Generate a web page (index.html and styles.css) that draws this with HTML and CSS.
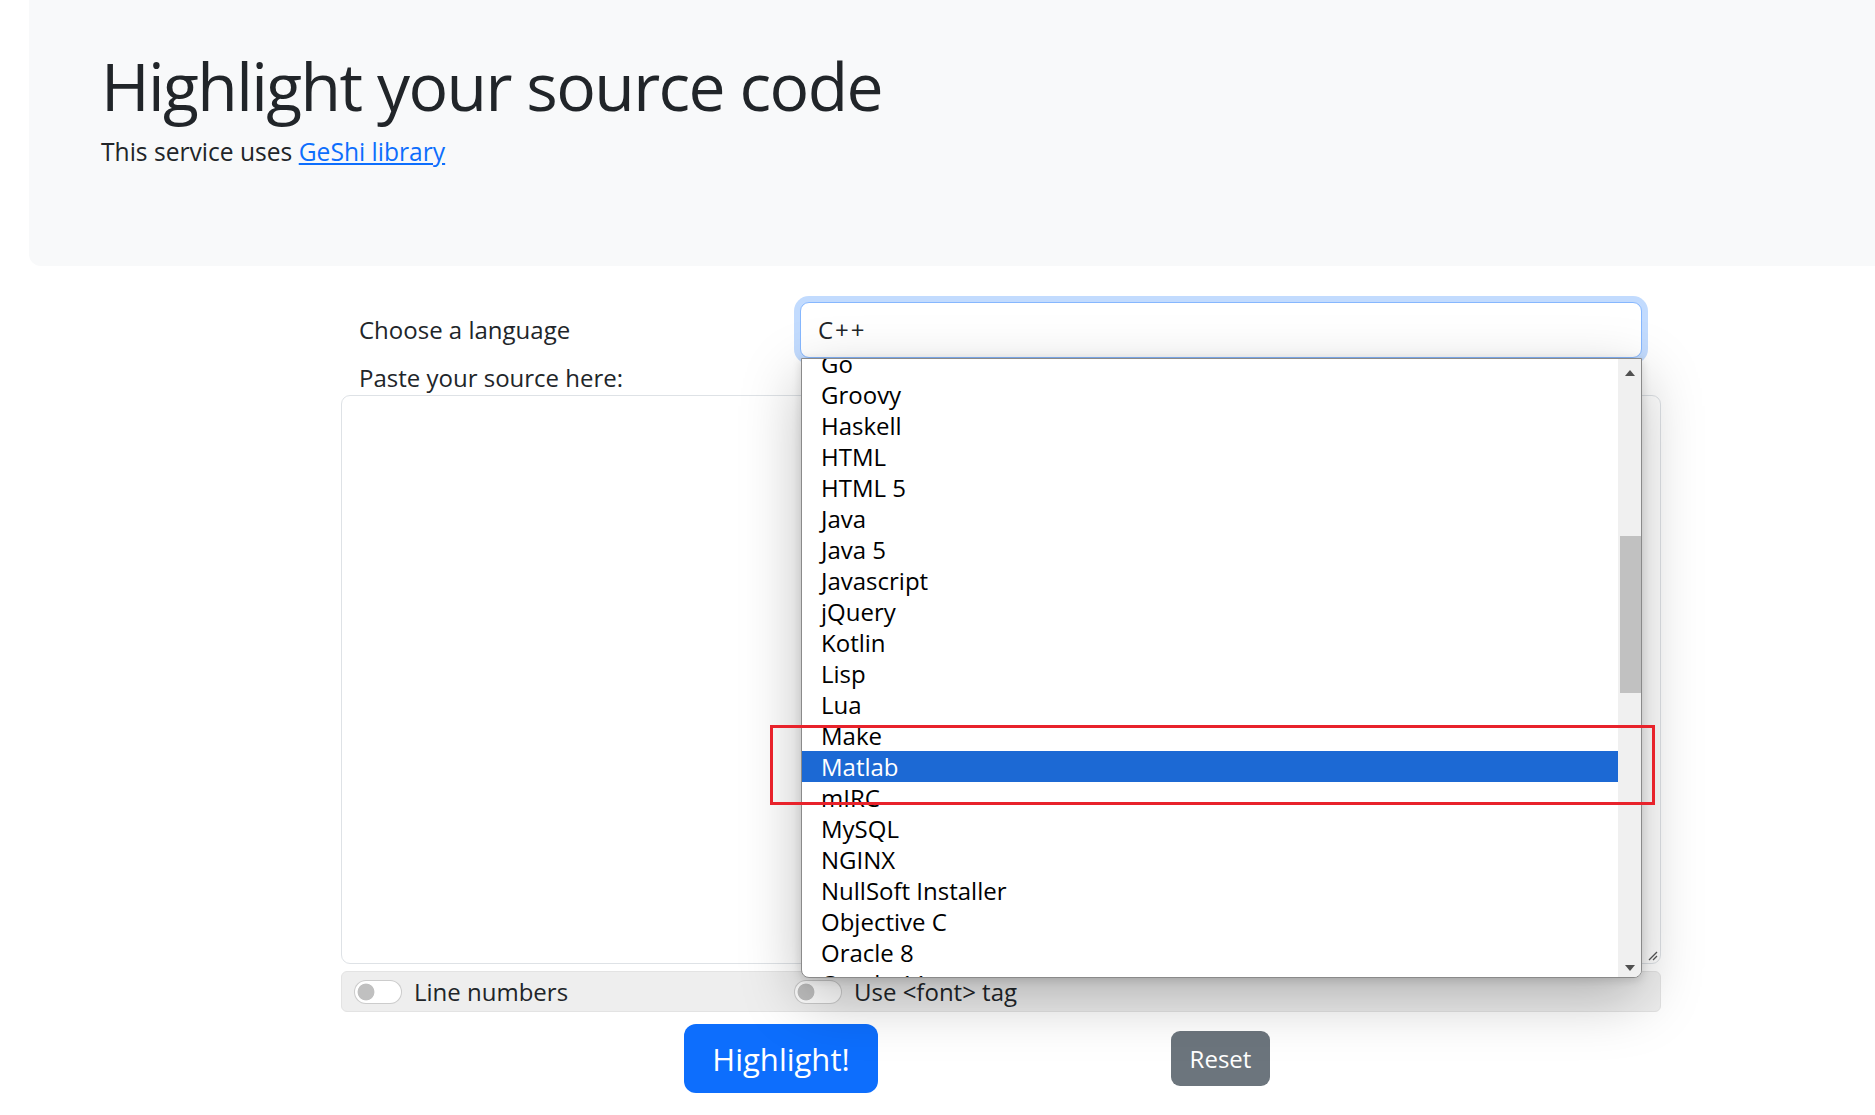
FILE: index.html
```html
<!DOCTYPE html>
<html lang="en">
<head>
<meta charset="utf-8">
<title>Highlight your source code</title>
<link rel="stylesheet" href="styles.css">
</head>
<body>
<header class="jumbotron">
  <h1 class="title">Highlight your source code</h1>
  <p class="intro">This service uses <a href="#" class="link">GeShi library</a></p>
</header>
<form class="form">
  <div class="lang-row">
    <label class="label">Choose a language</label>
    <div class="select-wrap">
      <div class="select">C++</div>
      <div class="popup">
        <ul class="list">
          <li>Go</li>
          <li>Groovy</li>
          <li>Haskell</li>
          <li>HTML</li>
          <li>HTML 5</li>
          <li>Java</li>
          <li>Java 5</li>
          <li>Javascript</li>
          <li>jQuery</li>
          <li>Kotlin</li>
          <li>Lisp</li>
          <li>Lua</li>
          <li>Make</li>
          <li class="sel">Matlab</li>
          <li>mIRC</li>
          <li>MySQL</li>
          <li>NGINX</li>
          <li>NullSoft Installer</li>
          <li>Objective C</li>
          <li>Oracle 8</li>
          <li>Oracle 11</li>
        </ul>
        <div class="scrollbar">
          <span class="arrow arrow-up"><i class="tri tri-up"></i></span>
          <span class="thumb"></span>
          <span class="arrow arrow-down"><i class="tri tri-down"></i></span>
        </div>
      </div>
    </div>
  </div>
  <label class="label paste">Paste your source here:</label>
  <div class="textarea">
    <svg class="grip" width="12" height="12" viewBox="0 0 12 12"><path d="M11 3 L3 11 M11 7 L7 11" stroke="#555" stroke-width="1.3" fill="none"/></svg>
  </div>
  <div class="opts">
    <label class="opt"><span class="switch"></span>Line numbers</label>
    <label class="opt"><span class="switch"></span>Use &lt;font&gt; tag</label>
  </div>
  <div class="actions">
    <button type="button" class="btn btn-primary">Highlight!</button>
    <button type="button" class="btn btn-secondary">Reset</button>
  </div>
</form>
<div class="annot"></div>
</body>
</html>
```
FILE: styles.css
```css
html, body {
  margin: 0;
  padding: 0;
}
body {
  font-family: "Open Sans", "Noto Sans", sans-serif;
  font-size: 24px;
  line-height: 36px;
  color: #212529;
  background: #fff;
  overflow: hidden;
  position: relative;
  height: 1115px;
}
.jumbotron {
  margin-left: 29px;
  height: 266px;
  box-sizing: border-box;
  padding: 46px 72px 0;
  background: #f8f9fa;
  border-bottom-left-radius: 12px;
}
.title {
  margin: 0;
  font-size: 66px;
  line-height: 79px;
  font-weight: 400;
  letter-spacing: -1.6px;
}
.intro {
  margin: 9px 0 0;
  font-size: 24.6px;
}
.link {
  color: #0d6efd;
  text-decoration: underline;
}
.form {
  margin: 36px 0 0 341px;
  width: 1320px;
}
.lang-row {
  display: flex;
  align-items: center;
}
.label {
  display: block;
  box-sizing: border-box;
  width: 459px;
  padding-left: 18px;
}
.select-wrap {
  position: relative;
  width: 842px;
}
.select {
  height: 56px;
  box-sizing: border-box;
  border: 1px solid #86b7fe;
  border-radius: 9px;
  box-shadow: 0 0 0 6px rgba(13, 110, 253, 0.25);
  padding: 0 17px;
  line-height: 54px;
  letter-spacing: 2px;
  background: #fff;
}
.popup {
  position: absolute;
  top: 56px;
  left: 1px;
  width: 841px;
  height: 620px;
  box-sizing: border-box;
  border: 1px solid #8a8a8a;
  border-radius: 0 0 8px 8px;
  background: #fff;
  display: flex;
  overflow: hidden;
  z-index: 2;
  box-shadow: 0 20px 60px rgba(0, 0, 0, 0.26), 0 2px 10px rgba(0, 0, 0, 0.14);
}
.list {
  flex: 1;
  margin: 0;
  padding: 0;
  list-style: none;
  overflow: hidden;
}
.list li {
  height: 31.03px;
  line-height: 31px;
  padding-left: 19px;
  color: #000;
  white-space: nowrap;
}
.list li:first-child {
  margin-top: -11px;
}
.list li.sel {
  background: #1c69d4;
  color: #fff;
}
.scrollbar {
  width: 23px;
  background: #f0f0f0;
  display: flex;
  flex-direction: column;
}
.arrow {
  display: flex;
  align-items: center;
  justify-content: center;
}
.arrow-up {
  height: 28px;
}
.arrow-down {
  height: 18px;
  margin-top: auto;
}
.tri {
  width: 0;
  height: 0;
  border-left: 5.5px solid transparent;
  border-right: 5.5px solid transparent;
}
.tri-up {
  border-bottom: 6px solid #505050;
}
.tri-down {
  border-top: 6px solid #505050;
}
.thumb {
  margin: 149px 0 0 2px;
  height: 157px;
  background: #c1c1c1;
}
.paste {
  margin-top: 2px;
  height: 35px;
}
.textarea {
  height: 569px;
  box-sizing: border-box;
  border: 1px solid #dee2e6;
  border-radius: 9px;
  background: #fff;
  display: flex;
  align-items: flex-end;
  justify-content: flex-end;
  padding: 0 2px 2px 0;
}
.opts {
  margin-top: 7px;
  height: 41px;
  box-sizing: border-box;
  background: #eeeeee;
  border: 1px solid #e3e3e3;
  border-radius: 6px;
  display: grid;
  grid-template-columns: 440px 1fr;
  align-items: center;
}
.opt {
  display: flex;
  align-items: center;
  gap: 12px;
  padding-left: 12px;
}
.switch {
  width: 48px;
  height: 24px;
  box-sizing: border-box;
  border: 1px solid rgba(0, 0, 0, 0.2);
  border-radius: 12px;
  background: #fff radial-gradient(circle at 11px 50%, #c0c0c0 8px, transparent 8.8px);
}
.actions {
  display: flex;
  align-items: center;
  margin-top: 12px;
}
.btn {
  font-family: inherit;
  border: none;
  color: #fff;
  display: flex;
  align-items: center;
  justify-content: center;
  padding: 0;
}
.btn-primary {
  margin-left: 343px;
  width: 194px;
  height: 69px;
  border-radius: 12px;
  background: #0d6efd;
  font-size: 31px;
}
.btn-secondary {
  margin-left: 293px;
  width: 99px;
  height: 55px;
  border-radius: 9px;
  background: #6c757d;
  font-size: 24px;
}
.annot {
  position: absolute;
  left: 770px;
  top: 725px;
  width: 885px;
  height: 80px;
  box-sizing: border-box;
  border: 3px solid #e8222b;
  z-index: 3;
}
```
